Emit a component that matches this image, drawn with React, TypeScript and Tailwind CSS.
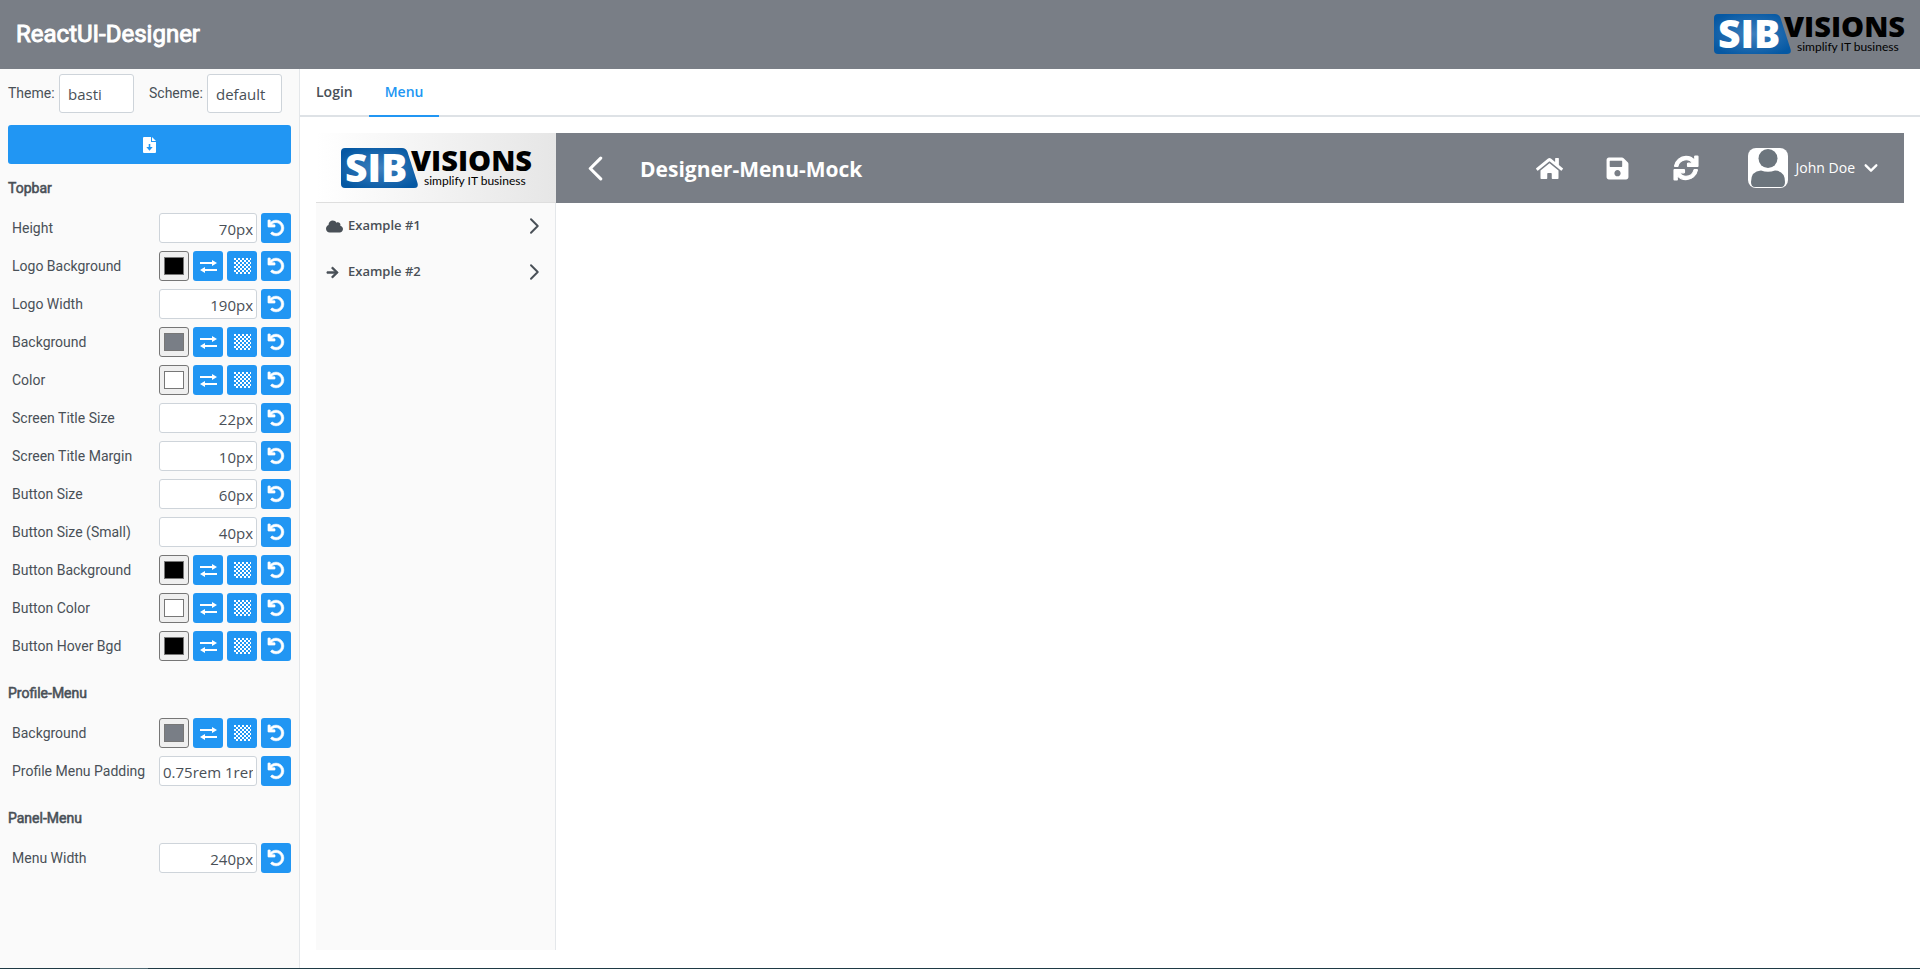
import { useId, useState } from "react";
import { FaArrowRight, FaCloud, FaHome, FaSave, FaSync, FaUndo } from "react-icons/fa";

type Field =
  | { kind: "size"; label: string; value: string; align?: "left" }
  | { kind: "color"; label: string; value: string };

type Section = { title: string; fields: Field[] };

const sections: Section[] = [
  {
    title: "Topbar",
    fields: [
      { kind: "size", label: "Height", value: "70px" },
      { kind: "color", label: "Logo Background", value: "#000000" },
      { kind: "size", label: "Logo Width", value: "190px" },
      { kind: "color", label: "Background", value: "#797e86" },
      { kind: "color", label: "Color", value: "#ffffff" },
      { kind: "size", label: "Screen Title Size", value: "22px" },
      { kind: "size", label: "Screen Title Margin", value: "10px" },
      { kind: "size", label: "Button Size", value: "60px" },
      { kind: "size", label: "Button Size (Small)", value: "40px" },
      { kind: "color", label: "Button Background", value: "#000000" },
      { kind: "color", label: "Button Color", value: "#ffffff" },
      { kind: "color", label: "Button Hover Bgd", value: "#000000" },
    ],
  },
  {
    title: "Profile-Menu",
    fields: [
      { kind: "color", label: "Background", value: "#797e86" },
      { kind: "size", label: "Profile Menu Padding", value: "0.75rem 1rem", align: "left" },
    ],
  },
  {
    title: "Panel-Menu",
    fields: [{ kind: "size", label: "Menu Width", value: "240px" }],
  },
];

function Logo() {
  const id = useId();
  return (
    <svg
      width="190"
      height="40"
      viewBox="0 0 190 40"
      role="img"
      aria-label="SIB Visions"
      className="shrink-0 overflow-visible"
    >
      <defs>
        <radialGradient id={id} cx="50%" cy="50%" r="60%">
          <stop offset="0" stopColor="#3f80bd" />
          <stop offset="1" stopColor="#0558a3" />
        </radialGradient>
      </defs>
      <path
        d="M4 0H61Q65 0 66.500 4L76.500 35Q78 40 73 40H4Q0 40 0 36V4Q0 0 4 0Z"
        fill={`url(#${id})`}
      />
      <text x="4" y="34" fontFamily="'Open Sans', sans-serif" fontWeight="800" fontSize="39" fill="#fff">
        SIB
      </text>
      <text x="70" y="23" fontFamily="'Open Sans', sans-serif" fontWeight="800" fontSize="29" fill="#000">
        VISIONS
      </text>
      <text x="83" y="37" fontFamily="Lato, sans-serif" fontSize="12" fill="#000">
        simplify IT business
      </text>
    </svg>
  );
}

function Checkerboard() {
  const id = useId();
  return (
    <svg width="17" height="16" viewBox="0 0 17 16" shapeRendering="crispEdges" aria-hidden="true">
      <defs>
        <pattern id={id} width="4" height="4" patternUnits="userSpaceOnUse">
          <path d="M0 0h2v2h-2zM2 2h2v2h-2z" fill="#fff" />
        </pattern>
      </defs>
      <rect width="17" height="16" fill={`url(#${id})`} />
    </svg>
  );
}

function SwapIcon() {
  return (
    <svg width="17" height="13" viewBox="0 0 17 13" fill="currentColor" aria-hidden="true">
      <path d="M0 2H12V0L17 3L12 6V4H0ZM17 9H5V7L0 10L5 13V11H17Z" />
    </svg>
  );
}

function DownloadIcon() {
  return (
    <svg width="13" height="16" viewBox="0 0 13 16" fill="currentColor" aria-hidden="true">
      <path
        fillRule="evenodd"
        d="M1 0H8V5H13V15Q13 16 12 16H1Q0 16 0 15V1Q0 0 1 0ZM5.700 7V10H3.300L6.500 13.700L9.700 10H7.300V7Z"
      />
      <path d="M9 0L13 4H9Z" />
    </svg>
  );
}

function Chevron({ d, size, stroke }: { d: string; size: number; stroke: number }) {
  return (
    <svg
      width={size}
      height={size}
      viewBox="0 0 24 24"
      fill="none"
      stroke="currentColor"
      strokeWidth={stroke}
      strokeLinecap="round"
      strokeLinejoin="round"
      aria-hidden="true"
    >
      <path d={d} />
    </svg>
  );
}

function ToolButton({ label, children }: { label: string; children: React.ReactNode }) {
  return (
    <button
      type="button"
      aria-label={label}
      className="flex size-[30px] shrink-0 items-center justify-center rounded-[3px] bg-[#2196f3] text-white"
    >
      {children}
    </button>
  );
}

function FieldRow({ field }: { field: Field }) {
  const id = useId();
  const [value, setValue] = useState(field.value);
  return (
    <div className="flex items-center gap-1 pl-1">
      <label htmlFor={id} className="grow whitespace-nowrap text-sm">
        {field.label}
      </label>
      {field.kind === "size" ? (
        <input
          id={id}
          value={value}
          onChange={(e) => setValue(e.target.value)}
          className={`h-[30px] w-[98px] shrink-0 rounded-[3px] border border-[#ced4da] bg-white px-[3px] pt-px font-['Open_Sans',sans-serif] text-[15px] ${
            field.align === "left" ? "text-left" : "text-right"
          }`}
        />
      ) : (
        <>
          <input
            id={id}
            type="color"
            value={value}
            onChange={(e) => setValue(e.target.value)}
            className="size-[30px] shrink-0 rounded-[3px] border border-[#767676] bg-[#efefef] px-1 py-[5px] [&::-webkit-color-swatch-wrapper]:p-0 [&::-webkit-color-swatch]:rounded-none [&::-webkit-color-swatch]:border [&::-webkit-color-swatch]:border-[#777777]"
          />
          <ToolButton label={`Swap ${field.label}`}>
            <SwapIcon />
          </ToolButton>
          <ToolButton label={`Transparent ${field.label}`}>
            <Checkerboard />
          </ToolButton>
        </>
      )}
      <ToolButton label={`Reset ${field.label}`}>
        <FaUndo size={16} strokeWidth={24} className="overflow-visible" />
      </ToolButton>
    </div>
  );
}

function Sidebar() {
  return (
    <aside className="flex w-[300px] shrink-0 flex-col border-r border-[#e4e7ea] bg-[#fafafa] px-2 pt-[5px]">
      <div className="flex items-center">
        <label htmlFor="theme" className="w-[51px] pb-[2px] text-sm">
          Theme:
        </label>
        <input
          id="theme"
          defaultValue="basti"
          className="h-[39px] w-[75px] rounded-[3px] border border-[#ced4da] bg-white px-2 pt-px font-['Open_Sans',sans-serif] text-[15px]"
        />
        <label htmlFor="scheme" className="ml-[15px] w-[58px] pb-[2px] text-sm">
          Scheme:
        </label>
        <input
          id="scheme"
          defaultValue="default"
          className="h-[39px] w-[75px] rounded-[3px] border border-[#ced4da] bg-white px-2 pt-px font-['Open_Sans',sans-serif] text-[15px]"
        />
      </div>
      <button
        type="button"
        aria-label="Download"
        className="mt-3 flex h-[39px] items-center justify-center rounded-[3px] bg-[#2196f3] text-white"
      >
        <DownloadIcon />
      </button>
      <div className="mt-[14px] flex flex-col gap-[22px]">
        {sections.map((section) => (
          <section key={section.title} className="flex flex-col gap-2">
            <h2 className="mb-[7px] text-sm leading-5 font-normal [-webkit-text-stroke:0.04em]">{section.title}</h2>
            {section.fields.map((field) => (
              <FieldRow key={field.label} field={field} />
            ))}
          </section>
        ))}
      </div>
    </aside>
  );
}

function MenuItem({ icon, label }: { icon: React.ReactNode; label: string }) {
  return (
    <li>
      <a href="#" className="flex h-[46px] items-center pr-3 pl-[10px] text-[13px] font-semibold">
        <span className="w-[22px]">{icon}</span>
        <span className="grow">{label}</span>
        <Chevron d="M8 3l9 9-9 9" size={18} stroke={2.6} />
      </a>
    </li>
  );
}

function MenuPreview() {
  return (
    <div className="flex grow flex-col px-4 pt-4 pb-[18px]">
      <div className="flex h-[70px]">
        <div className="flex w-60 shrink-0 items-center justify-center border-b border-[#dedede] bg-linear-to-r from-white to-[#e6e6e6]">
          <Logo />
        </div>
        <div className="flex grow items-center bg-[#797e86] text-white">
          <button type="button" aria-label="Collapse menu" className="flex w-[84px] items-center justify-center pr-[6px]">
            <Chevron d="M17 2L7 12l10 10" size={25} stroke={3} />
          </button>
          <h2 className="grow pt-[3px] text-[21px] font-bold">Designer-Menu-Mock</h2>
          <div className="flex items-center">
            <button type="button" aria-label="Home" className="flex w-[68px] justify-center">
              <FaHome size={27} />
            </button>
            <button type="button" aria-label="Save" className="flex w-[68px] justify-center">
              <FaSave size={25} />
            </button>
            <button type="button" aria-label="Reload" className="flex w-[68px] justify-center">
              <FaSync size={24} strokeWidth={24} className="overflow-visible" />
            </button>
          </div>
          <button type="button" className="mr-[25px] ml-7 flex items-center gap-2 text-sm">
            <svg width="40" height="40" viewBox="0 0 40 40" aria-hidden="true">
              <rect width="40" height="40" rx="8" fill="#fff" />
              <circle cx="20" cy="10.500" r="9.500" fill="#6c757d" />
              <path
                d="M13 22.500Q20 25 27 22.500Q37 23 37 34Q37 39 33 39H7Q3 39 3 34Q3 23 13 22.500Z"
                fill="#6c757d"
              />
            </svg>
            <span>John Doe</span>
            <Chevron d="M4 8l8 8 8-8" size={16} stroke={3.5} />
          </button>
        </div>
      </div>
      <nav className="w-60 grow border-r border-[#e4e7ea] bg-[#fafafa]">
        <ul>
          <MenuItem icon={<FaCloud size={17} />} label="Example #1" />
          <MenuItem
            icon={<FaArrowRight size={13} strokeWidth={20} className="overflow-visible" />}
            label="Example #2"
          />
        </ul>
      </nav>
    </div>
  );
}

export default function App() {
  return (
    <div className="flex min-h-screen flex-col bg-white font-[Roboto,sans-serif] text-[#495057]">
      <header className="flex h-[69px] items-center justify-between bg-[#797e86] px-4 pb-px">
        <h1 className="text-2xl font-normal text-white [-webkit-text-stroke:0.04em]">ReactUI-Designer</h1>
        <Logo />
      </header>
      <div className="flex grow">
        <Sidebar />
        <main className="flex grow flex-col font-['Open_Sans',sans-serif]">
          <div role="tablist" className="flex h-12 border-b-2 border-[#dee2e6] text-sm font-semibold">
            <button type="button" role="tab" aria-selected="false" className="-mb-[2px] border-b-2 border-transparent px-4">
              Login
            </button>
            <button
              type="button"
              role="tab"
              aria-selected="true"
              className="-mb-[2px] border-b-2 border-[#2196f3] px-4 text-[#2196f3]"
            >
              Menu
            </button>
          </div>
          <MenuPreview />
        </main>
      </div>
      <footer className="h-px bg-[#1f3a45]">
        <div className="ml-[100px] h-px w-12 bg-[#4f6872]" />
      </footer>
    </div>
  );
}
